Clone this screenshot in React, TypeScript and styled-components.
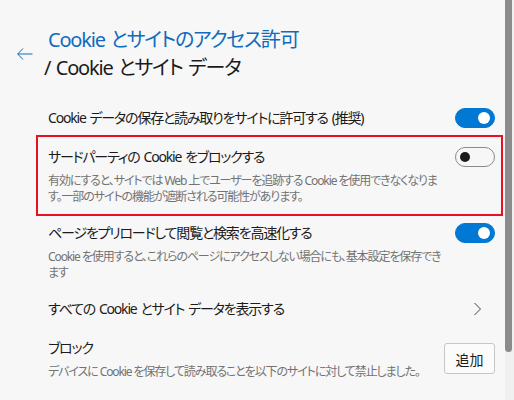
import React from "react";
import styled, { createGlobalStyle } from "styled-components";

const Global = createGlobalStyle`
  html, body { margin: 0; padding: 0; background: #f7f7f7; }
  body {
    font-family: "Noto Sans", "Noto Sans CJK JP", sans-serif;
    font-feature-settings: "palt";
    color: #1b1b1b;
    -webkit-font-smoothing: antialiased;
  }
`;

const Page = styled.div`
  display: flex;
  width: 514px;
  height: 400px;
  overflow: hidden;
  background: #f7f7f7;
`;

const Content = styled.div`
  flex: 1;
  min-width: 0;
  display: flex;
  flex-direction: column;
  padding-top: 26px;
`;

const ScrollTrack = styled.div`
  flex: none;
  width: 9px;
  background: #f0f0f0;
  display: flex;
  flex-direction: column;
`;

const Thumb = styled.div`
  width: 7px;
  height: 352px;
  background: #8b8b8b;
  border-radius: 0 0 4px 4px;
`;

const Header = styled.div`
  display: flex;
  align-items: center;
`;

const BackSlot = styled.div`
  flex: none;
  width: 48px;
  display: flex;
  justify-content: flex-start;
  padding-left: 17px;
  box-sizing: border-box;
`;

const Title = styled.h1`
  margin: 0;
  font-size: 20px;
  font-weight: 400;
  line-height: 28px;
  letter-spacing: -1.2px;
  word-spacing: 1.5px;
  white-space: nowrap;
`;

const TitleLink = styled.span`
  display: block;
  color: #0f6cbd;
`;

const TitleCurrent = styled.span`
  display: block;
  margin-left: -4px;
  color: #1b1b1b;
`;

const Rows = styled.div`
  display: flex;
  flex-direction: column;
  gap: 19px;
  margin-top: 26px;
  padding: 0 10px 0 48px;
`;

const Row = styled.div<{ $highlight?: boolean; $center?: boolean }>`
  position: relative;
  display: flex;
  align-items: ${(p) => (p.$center ? "center" : "flex-start")};
  justify-content: space-between;
  gap: 8px;
  ${(p) =>
    p.$highlight &&
    `
    &::after {
      content: "";
      position: absolute;
      top: -12px;
      bottom: -12px;
      left: -12px;
      right: -8px;
      border: 2px solid #e81123;
      pointer-events: none;
    }
  `}
`;

const RowText = styled.div`
  flex: 1;
  display: flex;
  flex-direction: column;
  gap: 6px;
  min-width: 0;
`;

const RowTitle = styled.div`
  font-size: 14px;
  line-height: 20px;
  letter-spacing: -1.2px;
  word-spacing: 1.5px;
  white-space: nowrap;
`;

const RowDesc = styled.div`
  font-size: 12px;
  line-height: 15.5px;
  letter-spacing: -1.1px;
  color: #737373;
  white-space: nowrap;
`;

const Track = styled.div<{ $on: boolean }>`
  flex: none;
  width: 40px;
  height: 20px;
  box-sizing: border-box;
  border-radius: 10px;
  display: flex;
  align-items: center;
  justify-content: ${(p) => (p.$on ? "flex-end" : "flex-start")};
  padding: 0 4px;
  background: ${(p) => (p.$on ? "#0078d4" : "transparent")};
  border: 1px solid ${(p) => (p.$on ? "#0078d4" : "#8a8a8a")};
`;

const Knob = styled.div<{ $on: boolean }>`
  width: ${(p) => (p.$on ? "12px" : "10px")};
  height: ${(p) => (p.$on ? "12px" : "10px")};
  border-radius: 50%;
  background: ${(p) => (p.$on ? "#ffffff" : "#1b1b1b")};
`;

const AddButton = styled.button`
  flex: none;
  width: 51px;
  height: 31px;
  border: 1px solid #c6c6c6;
  border-radius: 3px;
  background: #fbfbfb;
  color: #1b1b1b;
  font-family: inherit;
  font-size: 14px;
  padding: 0;
`;

const ChevronSlot = styled.div`
  flex: none;
  width: 22px;
  display: flex;
  justify-content: flex-start;
`;

const Toggle = ({ on }: { on: boolean }) => (
  <Track $on={on}>
    <Knob $on={on} />
  </Track>
);

export default function App() {
  return (
    <>
      <Global />
      <Page>
        <Content>
          <Header>
            <BackSlot>
              <svg width="16" height="12" viewBox="0 0 16 12">
                <path
                  d="M6 0.5 L0.7 6 L6 11.5 M0.7 6 H15.5"
                  fill="none"
                  stroke="#0f6cbd"
                  strokeWidth="1"
                />
              </svg>
            </BackSlot>
            <Title>
              <TitleLink>Cookie とサイトのアクセス許可</TitleLink>
              <TitleCurrent>/ Cookie とサイト データ</TitleCurrent>
            </Title>
          </Header>
          <Rows>
            <Row>
              <RowText>
                <RowTitle>Cookie データの保存と読み取りをサイトに許可する (推奨)</RowTitle>
              </RowText>
              <Toggle on />
            </Row>
            <Row $highlight>
              <RowText>
                <RowTitle>サードパーティの Cookie をブロックする</RowTitle>
                <RowDesc>
                  有効にすると、サイトでは Web 上でユーザーを追跡する Cookie を使用できなくなりま
                  <br />
                  す。一部のサイトの機能が遮断される可能性があります。
                </RowDesc>
              </RowText>
              <Toggle on={false} />
            </Row>
            <Row>
              <RowText>
                <RowTitle>ページをプリロードして閲覧と検索を高速化する</RowTitle>
                <RowDesc>
                  Cookie を使用すると、これらのページにアクセスしない場合にも、基本設定を保存でき
                  <br />
                  ます
                </RowDesc>
              </RowText>
              <Toggle on />
            </Row>
            <Row $center>
              <RowText>
                <RowTitle>すべての Cookie とサイト データを表示する</RowTitle>
              </RowText>
              <ChevronSlot>
                <svg width="10" height="14" viewBox="0 0 10 14">
                  <path d="M1.5 1 L7.5 7 L1.5 13" fill="none" stroke="#444" strokeWidth="1" />
                </svg>
              </ChevronSlot>
            </Row>
            <Row $center>
              <RowText>
                <RowTitle>ブロック</RowTitle>
                <RowDesc>デバイスに Cookie を保存して読み取ることを以下のサイトに対して禁止しました。</RowDesc>
              </RowText>
              <AddButton>追加</AddButton>
            </Row>
          </Rows>
        </Content>
        <ScrollTrack>
          <Thumb />
        </ScrollTrack>
      </Page>
    </>
  );
}
